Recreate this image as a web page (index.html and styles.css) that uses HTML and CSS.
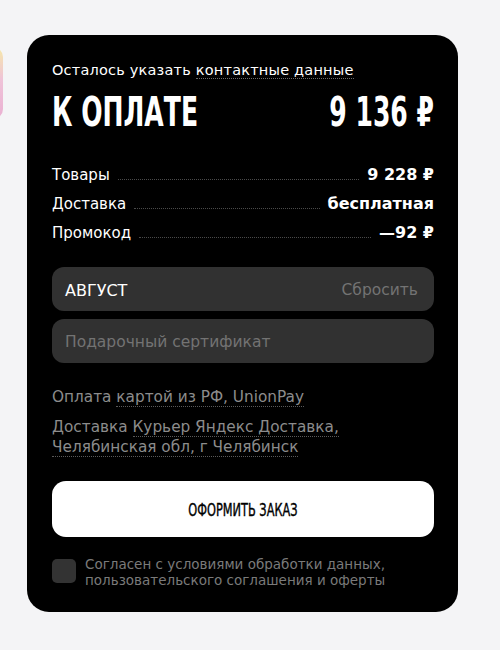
FILE: index.html
```html
<!DOCTYPE html>
<html>

<head>
    <meta charset="UTF-8">
    <title>Оформление заказа</title>
    <link rel="stylesheet" href="styles.css">
</head>

<body>
    <div class="page">
        <div class="side">
            <div class="promo"></div>
        </div>
        <section class="summary">
            <p class="hint">Осталось указать <span class="link">контактные данные</span></p>
            <div class="total">
                <span class="total-label">К ОПЛАТЕ</span>
                <span class="total-sum">9 136 ₽</span>
            </div>
            <ul class="lines">
                <li><span class="name">Товары</span><i class="dots"></i><b>9 228 ₽</b></li>
                <li><span class="name">Доставка</span><i class="dots"></i><b>бесплатная</b></li>
                <li><span class="name">Промокод</span><i class="dots"></i><b>—92 ₽</b></li>
            </ul>
            <div class="field">
                <span class="value">АВГУСТ</span>
                <span class="reset">Сбросить</span>
            </div>
            <div class="field">
                <span class="placeholder">Подарочный сертификат</span>
            </div>
            <p class="info">Оплата <span class="link">картой из РФ, UnionPay</span></p>
            <p class="info info-delivery">Доставка <span class="link">Курьер Яндекс Доставка,<br>Челябинская обл, г Челябинск</span></p>
            <button class="order"><span>ОФОРМИТЬ ЗАКАЗ</span></button>
            <label class="agree">
                <span class="check"></span>
                <span class="agree-text">Согласен с условиями обработки данных,<br>пользовательского соглашения и оферты</span>
            </label>
        </section>
    </div>
</body>

</html>
```

FILE: styles.css
```css
body,
p,
ul,
li,
button {
    margin: 0;
    padding: 0;
}

ul {
    list-style: none;
}

body {
    background: #f4f4f6;
    font-family: "DejaVu Sans", "Noto Sans", sans-serif;
}

.page {
    display: flex;
    align-items: flex-start;
    padding-top: 35px;
}

.side {
    width: 3px;
    overflow: hidden;
    margin-top: 12px;
}

.promo {
    width: 40px;
    height: 72px;
    margin-left: -37px;
    border-radius: 10px;
    background: linear-gradient(180deg, #f6e9a8 0%, #efc3d8 45%, #eab0d2 100%);
}

.summary {
    width: 431px;
    margin-left: 24px;
    padding: 25px 24px 24px 25px;
    box-sizing: border-box;
    border-radius: 22px;
    background: #000;
    color: #fff;
}

.hint {
    font-size: 14.5px;
    line-height: 20px;
    letter-spacing: 0.2px;
}

.link {
    border-bottom: 1px dotted #6a6a6a;
}

.total {
    display: flex;
    justify-content: space-between;
    margin-top: 12px;
    font-family: "DejaVu Sans Condensed", sans-serif;
    font-weight: bold;
    font-size: 41px;
    line-height: 40px;
}

.total span {
    display: inline-block;
    transform: scaleX(0.68);
}

.total-label {
    transform-origin: left center;
}

.total-sum {
    transform-origin: right center;
}

.lines {
    margin-top: 28px;
}

.lines li {
    display: flex;
    align-items: baseline;
    height: 29px;
    line-height: 29px;
    font-size: 15px;
}

.dots {
    flex: 1;
    margin: 0 8px;
    border-bottom: 1px dotted #4a4a4a;
}

.lines b {
    font-size: 16px;
    font-weight: bold;
}

.field {
    display: flex;
    justify-content: space-between;
    align-items: center;
    height: 44px;
    margin-top: 8px;
    padding: 2px 16px 0 13px;
    box-sizing: border-box;
    border-radius: 12px;
    background: #313131;
    font-size: 15.5px;
}

.lines + .field {
    margin-top: 20px;
}

.value {
    font-size: 16px;
}

.reset,
.placeholder {
    color: #737373;
}

.info {
    margin-top: 24px;
    color: #8c8c8c;
    font-size: 15.3px;
    line-height: 20px;
}

.info .link {
    border-bottom-color: #5a5a5a;
}

.info-delivery {
    margin-top: 10px;
}

.order {
    display: block;
    width: 100%;
    height: 56px;
    margin-top: 24px;
    border: none;
    border-radius: 14px;
    background: #fff;
    color: #000;
    font-family: "DejaVu Sans Condensed", sans-serif;
    font-size: 18px;
    cursor: pointer;
}

.order span {
    display: inline-block;
    transform: scaleX(0.7);
    -webkit-text-stroke: 0.4px #000;
}

.agree {
    display: flex;
    gap: 9px;
    margin-top: 19px;
    color: #7a7a7a;
    font-size: 13.5px;
    line-height: 16px;
}

.check {
    flex: none;
    width: 24px;
    height: 24px;
    margin-top: 3px;
    border-radius: 5px;
    background: #333;
}
```
